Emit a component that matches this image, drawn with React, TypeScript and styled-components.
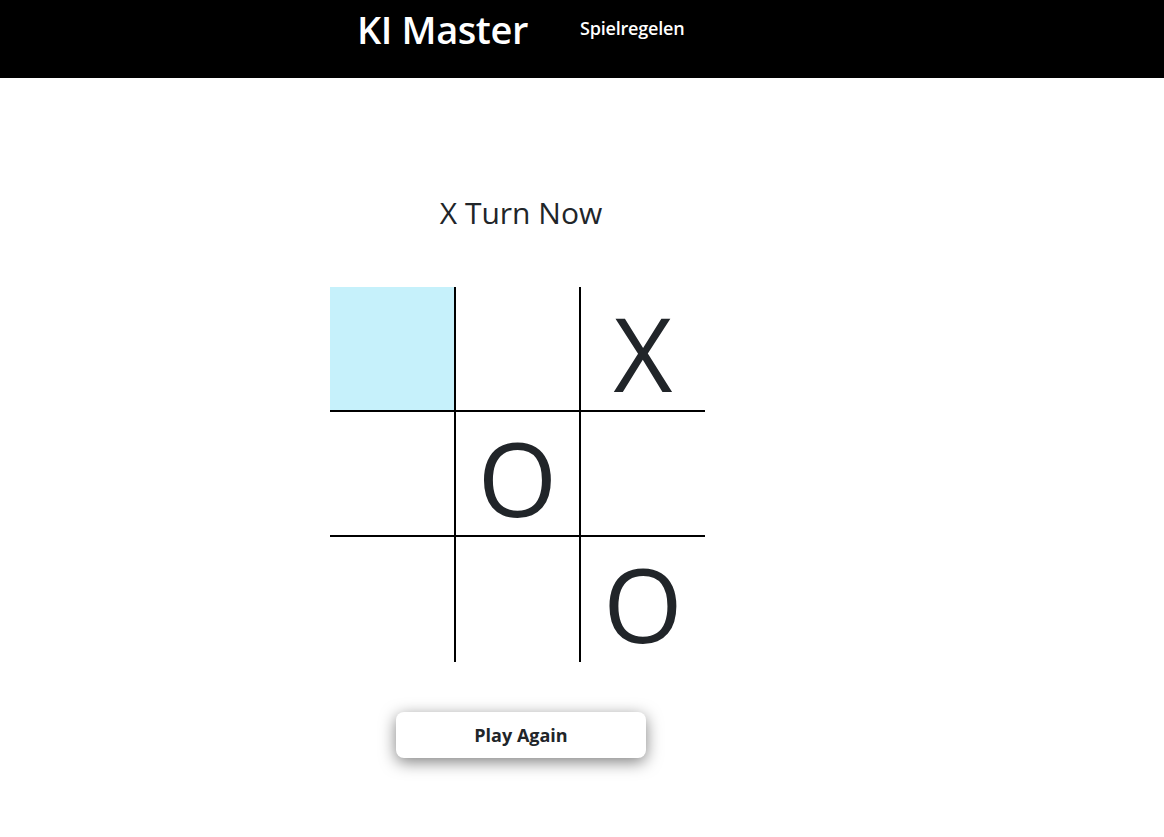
import React, { useState } from "react";
import styled, { createGlobalStyle } from "styled-components";

const GlobalStyle = createGlobalStyle`
  html, body {
    margin: 0;
    padding: 0;
    background: #ffffff;
    font-family: "Open Sans", "Noto Sans", "Liberation Sans", sans-serif;
    color: #212529;
  }
`;

const NavBar = styled.header`
  height: 78px;
  background: #000000;
  display: flex;
  align-items: flex-start;
  padding-left: 357px;
  gap: 52px;
`;

const Brand = styled.a`
  color: #ffffff;
  font-size: 38px;
  font-weight: 600;
  line-height: 1;
  margin-top: 10px;
  letter-spacing: -0.4px;
  text-decoration: none;
`;

const NavLink = styled.a`
  color: #ffffff;
  font-size: 18px;
  font-weight: 600;
  margin-top: 16px;
  letter-spacing: -0.2px;
  text-decoration: none;
`;

const Main = styled.main`
  width: 400px;
  margin-left: 321px;
  display: flex;
  flex-direction: column;
  align-items: center;
  padding-top: 116px;
  padding-bottom: 60px;
`;

const Status = styled.h2`
  margin: 0;
  font-size: 30px;
  font-weight: 400;
  line-height: 38px;
`;

const Board = styled.div`
  margin-top: 55px;
  margin-right: 7px;
  display: grid;
  grid-template-columns: 126px 125px 124px;
  grid-template-rows: repeat(3, 125px);
`;

const Cell = styled.div<{ $right: boolean; $bottom: boolean; $active: boolean }>`
  box-sizing: border-box;
  border-right: ${(p) => (p.$right ? "2px solid #000" : "none")};
  border-bottom: ${(p) => (p.$bottom ? "2px solid #000" : "none")};
  background: ${(p) => (p.$active ? "#c6f1fb" : "transparent")};
  display: flex;
  align-items: center;
  justify-content: center;
  padding-top: 8px;
  font-size: 102px;
  font-weight: 400;
  line-height: 1;
  cursor: pointer;
`;

const PlayAgain = styled.button`
  margin-top: 50px;
  width: 250px;
  height: 46px;
  border: none;
  border-radius: 8px;
  background: #ffffff;
  box-shadow: 0 4px 16px rgba(0, 0, 0, 0.5);
  font-family: inherit;
  font-size: 18px;
  font-weight: 700;
  color: #212529;
  cursor: pointer;
`;

const initial = ["", "", "X", "", "O", "", "", "", "O"];

export default function App() {
  const [cells] = useState(initial);
  const [hovered, setHovered] = useState<number | null>(0);

  return (
    <>
      <GlobalStyle />
      <NavBar>
        <Brand href="#">KI Master</Brand>
        <NavLink href="#">Spielregelen</NavLink>
      </NavBar>
      <Main>
        <Status>X Turn Now</Status>
        <Board>
          {cells.map((v, i) => (
            <Cell
              key={i}
              $right={i % 3 !== 2}
              $bottom={i < 6}
              $active={hovered === i}
              onMouseEnter={() => setHovered(i)}
            >
              {v}
            </Cell>
          ))}
        </Board>
        <PlayAgain>Play Again</PlayAgain>
      </Main>
    </>
  );
}
